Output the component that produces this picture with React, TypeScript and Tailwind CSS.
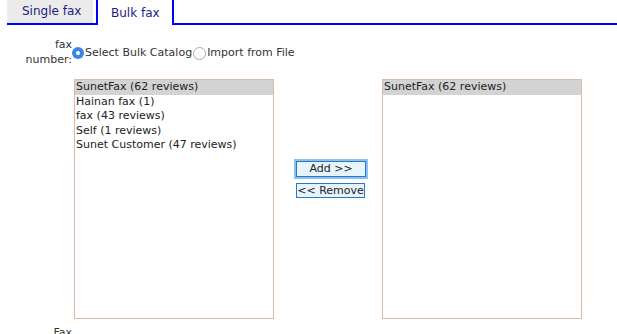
import React from "react";

const items = [
  "SunetFax (62 reviews)",
  "Hainan fax (1)",
  "fax (43 reviews)",
  "Self (1 reviews)",
  "Sunet Customer (47 reviews)",
];

function ListBox({ entries }: { entries: string[] }) {
  return (
    <div className="w-[200px] h-[240px] border border-[#d6bcaa] bg-white overflow-hidden">
      {entries.map((t, i) => (
        <div
          key={t}
          className={
            "h-[14.5px] leading-[14.5px] pl-[1px] whitespace-nowrap text-[#222] " +
            (i === 0 ? "bg-[#d3d3d3]" : "")
          }
        >
          {t}
        </div>
      ))}
    </div>
  );
}

export default function App() {
  return (
    <div
      className="w-[617px] h-[334px] overflow-hidden bg-white"
      style={{ fontFamily: '"DejaVu Sans", sans-serif' }}
    >
      <div className="ml-[7px] flex items-start h-[25px] border-b-2 border-[#0000ff]">
        <div className="w-[86px] h-[23px] bg-[#ebebeb] text-[12px] text-[#1c1c84] pl-[15px] pt-[3px] leading-[16px]">
          Single fax
        </div>
        <div className="ml-[3px] w-[78px] h-[25px] -mb-[2px] border-x-2 border-[#0000ff] bg-white text-[12px] text-[#1c1c84] pl-[13px] pt-[5px] leading-[16px]">
          Bulk fax
        </div>
      </div>

      <div className="text-[11px] text-[#333]">
        <div className="flex items-center mt-[12px]">
          <div className="w-[72px] text-right leading-[15px]">
            fax
            <br />
            number:
          </div>
          <div className="flex items-center mt-[2px]">
            <span className="w-[12px] h-[12px] rounded-full bg-[#3a86e8] flex items-center justify-center">
              <span className="w-[4px] h-[4px] rounded-full bg-white" />
            </span>
            <span className="ml-[1px]">Select Bulk Catalog</span>
            <span className="ml-[1px] w-[13px] h-[13px] rounded-full border border-[#a9a9a9] bg-white" />
            <span className="ml-[1px]">Import from File</span>
          </div>
        </div>

        <div className="flex mt-[12px] ml-[74px]">
          <ListBox entries={items} />
          <div className="ml-[22px] w-[70px] flex flex-col items-start pt-[82px]">
            <button className="w-[70px] h-[16px] border border-[#2a78c4] bg-[#e8f4fd] text-[11px] leading-[14px] text-[#222] ring-2 ring-[#8cc2f2]">
              Add &gt;&gt;
            </button>
            <button className="mt-[6px] w-[69px] h-[15px] border border-[#2a78c4] bg-[#e8f4fd] text-[11px] leading-[13px] text-[#222]">
              &lt;&lt; Remove
            </button>
          </div>
          <div className="ml-[16px]">
            <ListBox entries={[items[0]]} />
          </div>
        </div>

        <div className="mt-[6px] w-[72px] text-right pr-[0px] leading-[15px]">Fax</div>
      </div>
    </div>
  );
}
